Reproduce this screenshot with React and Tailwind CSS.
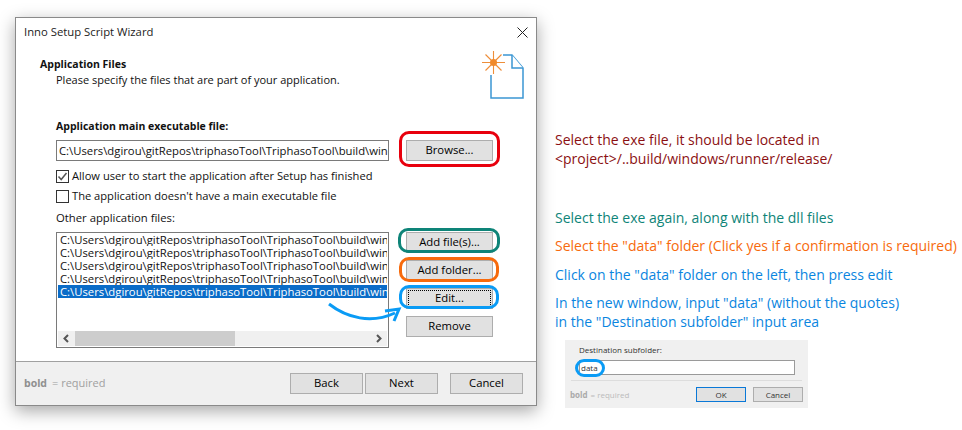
import React from 'react';

const INPUT_PATH = 'C:\\Users\\dgirou\\gitRepos\\triphasoTool\\TriphasoTool\\build\\wind';
const LIST_PATH = 'C:\\Users\\dgirou\\gitRepos\\triphasoTool\\TriphasoTool\\build\\win';

const WinButton = ({ children, ring, focus, className = '' }) => (
  <div className={`relative h-[21px] flex items-center justify-center bg-[#e1e1e1] border border-[#adadad] text-black ${className}`}>
    {focus && <div className="absolute inset-[1px] border border-dotted border-black" />}
    {children}
    {ring && <div className={`absolute rounded-[10px] border-[3px] ${ring}`} />}
  </div>
);

const PageIcon = () => (
  <svg width="50" height="52" viewBox="0 0 50 52" className="absolute right-[9px] top-[32px]">
    <path d="M14 25V48H46V18L35 5H26" fill="#fff" stroke="#3b97d3" strokeWidth="1.5" />
    <path d="M35 5V18H46" fill="#fff" stroke="#3b97d3" strokeWidth="1.5" />
    <g stroke="#ee8e39" strokeWidth="1.1">
      <path d="M5 12.500H28M16.500 1V24M8.500 4.500L24.500 20.500M24.500 4.500L8.500 20.500" />
    </g>
    <circle cx="16.500" cy="12.500" r="3.500" fill="#f08a2c" />
  </svg>
);

const Check = () => (
  <svg width="13" height="13" viewBox="0 0 13 13" className="shrink-0">
    <rect x="0.500" y="0.500" width="12" height="12" fill="#fff" stroke="#333" />
    <path d="M2.500 6.500L5.200 9.500L10.500 3" fill="none" stroke="#555" strokeWidth="1.500" />
  </svg>
);

const Dialog = () => (
  <div className="relative w-[522px] h-[389px] ml-[15px] mt-[17px] shrink-0 flex flex-col bg-white border border-[#8a8a8a] shadow-[0_5px_16px_rgba(0,0,0,0.35)] text-[11.300px] text-[#111] font-['Open_Sans',sans-serif]">
    <div className="h-[28px] flex items-center justify-between pl-[8px] pr-[8px] text-[#222]">
      <span>Inno Setup Script Wizard</span>
      <svg width="11" height="11" viewBox="0 0 11 11"><path d="M0.500 0.500L10.500 10.500M10.500 0.500L0.500 10.500" stroke="#222" /></svg>
    </div>
    <PageIcon />
    <div className="flex-1 flex flex-col pl-[24px]">
      <div className="mt-[10px] h-[16px] font-bold text-[10.500px] leading-[16px]">Application Files</div>
      <div className="ml-[16px] h-[16px] text-[11px] leading-[16px]">Please specify the files that are part of your application.</div>
      <div className="ml-[16px] mt-[29px] flex flex-col w-[440px]">
        <div className="h-[18px] font-bold text-[10.500px] leading-[18px]">Application main executable file:</div>
        <div className="flex mt-[5px] gap-[17px]">
          <div className="w-[333px] h-[21px] border border-[#7a7a7a] px-[2px] overflow-hidden whitespace-nowrap leading-[19px]">{INPUT_PATH}</div>
          <WinButton ring="-left-[8px] -right-[8px] -top-[10px] -bottom-[7px] border-[#e8000d]" className="w-[87px]">Browse...</WinButton>
        </div>
        <div className="flex items-center gap-[3px] mt-[7px] h-[16px] text-[11.150px]"><Check />Allow user to start the application after Setup has finished</div>
        <div className="flex items-center gap-[3px] mt-[4px] h-[16px] text-[11.150px]">
          <div className="w-[13px] h-[13px] border border-[#333] shrink-0" />The application doesn't have a main executable file
        </div>
        <div className="mt-[6px] h-[16px] leading-[16px]">Other application files:</div>
        <div className="flex mt-[6px] gap-[17px]">
          <div className="relative w-[333px] h-[116px] border border-[#7a7a7a] flex flex-col pl-[1px] pr-[1px]">
            {[0, 1, 2, 3, 4].map((i) => (
              <div key={i} className={`h-[13px] leading-[13px] pl-[2px] overflow-hidden whitespace-nowrap ${i === 4 ? 'bg-[#0a6cc8] text-white' : ''}`}>{LIST_PATH}</div>
            ))}
            <div className="mt-auto h-[15px] mb-[1px] flex items-center bg-[#f0f0f0]">
              <svg width="17" height="15" viewBox="0 0 17 15" className="shrink-0"><path d="M10 4L6.500 7.500L10 11" fill="none" stroke="#555" strokeWidth="2" /></svg>
              <div className="w-[160px] h-[15px] bg-[#cdcdcd]" />
              <div className="flex-1" />
              <svg width="17" height="15" viewBox="0 0 17 15" className="shrink-0"><path d="M7 4L10.500 7.500L7 11" fill="none" stroke="#555" strokeWidth="2" /></svg>
            </div>
          </div>
          <div className="w-[87px] flex flex-col gap-[7px]">
            <WinButton ring="-left-[9px] -right-[8px] -top-[5px] -bottom-[1px] border-[#0e8478]">Add file(s)...</WinButton>
            <WinButton ring="-left-[8px] -right-[7px] -top-[4px] -bottom-[2px] border-[#f76a0c]">Add folder...</WinButton>
            <WinButton focus ring="-left-[8px] -right-[7px] -top-[4px] -bottom-[1px] border-[#0a9bf5]">Edit...</WinButton>
            <WinButton>Remove</WinButton>
          </div>
        </div>
      </div>
      <svg width="76" height="26" viewBox="0 0 76 26" className="absolute left-[311px] top-[282px]">
        <path d="M2 4C20 18 44 24 68 13" fill="none" stroke="#0a9bf5" strokeWidth="3" />
        <path d="M58 11L72 9L67 21" fill="none" stroke="#0a9bf5" strokeWidth="3" />
      </svg>
    </div>
    <div className="h-[44px] flex items-center bg-[#f0f0f0] border-t border-[#a0a0a0] pl-[8px] pr-[13px]">
      <span className="font-bold text-[10.500px] text-[#8f8f8f]">bold</span>
      <span className="text-[11px] text-[#a0a0a0] ml-[5px]">= required</span>
      <div className="ml-auto flex">
        <WinButton className="w-[73px]">Back</WinButton>
        <WinButton className="w-[73px] ml-[2px]">Next</WinButton>
        <WinButton className="w-[73px] ml-[12px]">Cancel</WinButton>
      </div>
    </div>
  </div>
);

const Inset = () => (
  <div className="w-[243px] h-[68px] ml-[10px] mt-[9px] bg-[#f0f0f0] flex flex-col text-[8px] text-[#333]">
    <div className="mx-[6px] h-[41px] border-b border-[#ddd] pl-[8px] pt-[5px] relative">
      <div className="leading-[10px]">Destination subfolder:</div>
      <div className="mt-[5px] h-[15px] w-[216px] bg-white border border-[#9a9a9a] pl-[1px] leading-[13px]">data</div>
      <div className="absolute left-[4px] top-[19px] w-[30px] h-[18px] rounded-[9px] border-[3px] border-[#0a9bf5]" />
    </div>
    <div className="flex items-center flex-1 pl-[5px] pr-[5px]">
      <span className="font-bold text-[#aaa]">bold</span><span className="text-[#bbb] ml-[3px]">= required</span>
      <div className="ml-auto flex gap-[7px]">
        <div className="w-[50px] h-[15px] bg-[#e1e1e1] border border-[#0a78d7] text-center leading-[13px]">OK</div>
        <div className="w-[50px] h-[15px] bg-[#e1e1e1] border border-[#adadad] text-center leading-[13px]">Cancel</div>
      </div>
    </div>
  </div>
);

export default function App() {
  return (
    <div className="w-[962px] h-[430px] bg-white flex items-start overflow-hidden">
      <Dialog />
      <div className="ml-[18px] mt-[130px] flex flex-col whitespace-nowrap text-[14px] leading-[19px] font-['Open_Sans',sans-serif]">
        <div className="text-[#8b0f12]">Select the exe file, it should be located in</div>
        <div className="text-[#8b0f12]">&lt;project&gt;/..build/windows/runner/release/</div>
        <div className="text-[#0e8478] mt-[40px]">Select the exe again, along with the dll files</div>
        <div className="text-[#f76a0c] mt-[9px]">Select the "data" folder (Click yes if a confirmation is required)</div>
        <div className="text-[#0a85e0] mt-[10px]">Click on the "data" folder on the left, then press edit</div>
        <div className="text-[#0a85e0] mt-[9px]">In the new window, input "data" (without the quotes)</div>
        <div className="text-[#0a85e0]">in the "Destination subfolder" input area</div>
        <Inset />
      </div>
    </div>
  );
}
